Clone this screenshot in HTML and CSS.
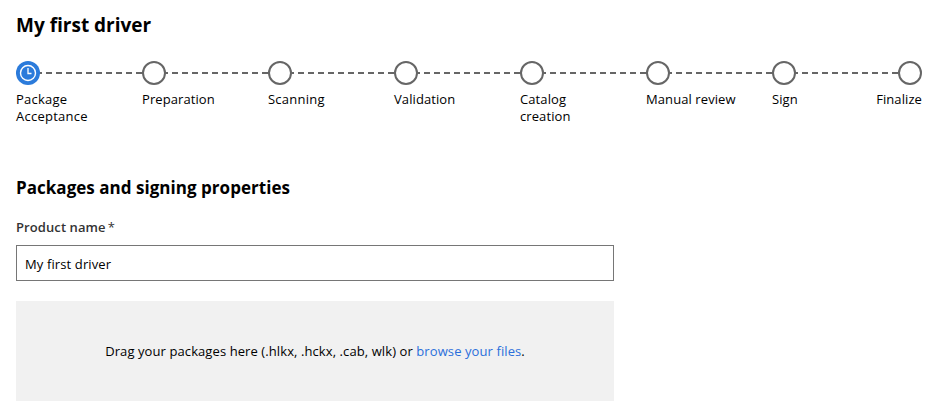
FILE: index.html
```html
<!DOCTYPE html>
<html lang="en">
<head>
<meta charset="utf-8">
<title>My first driver</title>
<link rel="stylesheet" href="styles.css">
</head>
<body>
<main class="page">
  <h1 class="title">My first driver</h1>
  <ol class="steps">
    <li class="step"><div class="track"><span class="dot dot-active"><svg class="clock" viewBox="0 0 24 24" fill="none" stroke="#fff"><circle cx="12" cy="12" r="7.5" stroke-width="1.4"/><path d="M12 7v5.5h3.5" stroke-width="1.3"/></svg></span></div><span class="label label-wide">Package<br>Acceptance</span></li>
    <li class="step"><div class="track"><span class="dot"></span></div><span class="label">Preparation</span></li>
    <li class="step"><div class="track"><span class="dot"></span></div><span class="label label-wide">Scanning</span></li>
    <li class="step"><div class="track"><span class="dot"></span></div><span class="label">Validation</span></li>
    <li class="step"><div class="track"><span class="dot"></span></div><span class="label">Catalog<br>creation</span></li>
    <li class="step"><div class="track"><span class="dot"></span></div><span class="label">Manual review</span></li>
    <li class="step"><div class="track"><span class="dot"></span></div><span class="label">Sign</span></li>
    <li class="step step-last"><div class="track"><span class="dot"></span></div><span class="label">Finalize</span></li>
  </ol>
  <h2 class="subtitle">Packages and signing properties</h2>
  <label class="field-label" for="product"><span class="field-name">Product name</span><span class="required">*</span></label>
  <input class="field" id="product" type="text" value="My first driver">
  <div class="drop"><p class="drop-text">Drag your packages here (.hlkx, .hckx, .cab, wlk) or <a class="link">browse your files</a>.</p></div>
</main>
</body>
</html>
```
FILE: styles.css
```css
* { box-sizing: border-box; }
body { margin: 0; background: #fff; color: #000; font: 13px/17px "Open Sans", "Noto Sans", sans-serif; letter-spacing: 0.09px; }
.page { padding: 11px 20px 0 16px; }
.title { margin: 0; font-size: 19px; line-height: 28px; font-weight: 700; letter-spacing: 0; }
.steps { display: flex; margin: 22px 0 0; padding: 0; list-style: none; height: 115px; }
.step { flex: 0 0 126px; }
.step-last { flex-basis: 24px; min-width: 0; display: flex; flex-direction: column; align-items: flex-end; }
.track { height: 24px; background: repeating-linear-gradient(90deg, #666 0 6px, transparent 6px 10px) 0 11px / 100% 2px no-repeat; }
.dot { display: block; width: 24px; height: 24px; border: 2px solid #666; border-radius: 50%; background: #fff; }
.dot-active { border: 0; background: #2b7bdb; }
.clock { display: block; width: 24px; height: 24px; }
.label { display: block; width: max-content; margin-top: 6px; }
.label-wide { letter-spacing: 0.24px; }
.step-last .track { background: none; }
.subtitle { margin: 0; font-size: 17px; line-height: 24px; font-weight: 700; letter-spacing: 0.03px; }
.field-label { display: flex; gap: 2px; margin-top: 18px; height: 18px; line-height: 18px; font-weight: 600; color: #333; }
.required { font-weight: 400; }
.field { display: block; width: 598px; height: 36px; margin: 9px 0 0; padding: 2px 8px 0; border: 1px solid #767676; background: #fff; color: #000; font: inherit; letter-spacing: 0.12px; }
.drop { display: flex; justify-content: center; align-items: center; width: 598px; height: 100px; margin-top: 20px; background: #f1f1f1; }
.drop-text { margin: 0; }
.link { color: #2b6fdb; }
```
